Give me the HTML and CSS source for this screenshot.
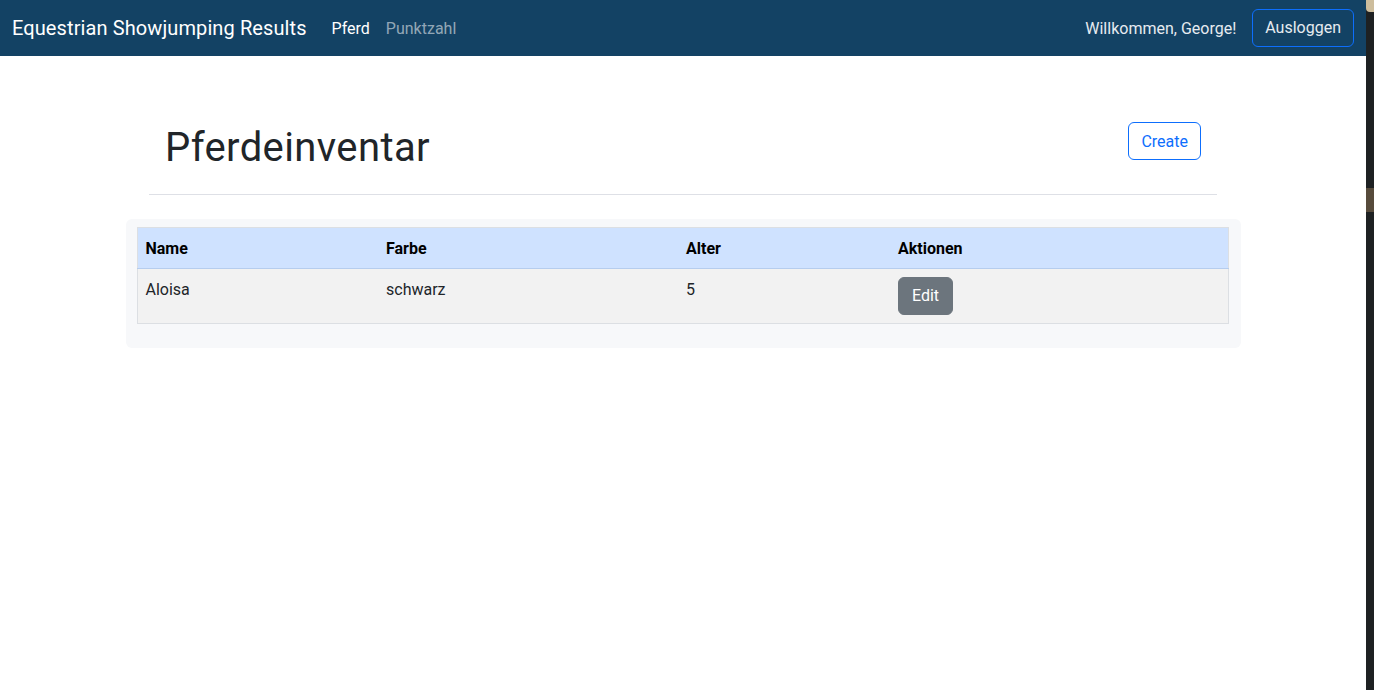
FILE: index.html
```html
<!DOCTYPE html>
<html lang="de">
<head>
<meta charset="utf-8">
<title>Equestrian Showjumping Results</title>
<link rel="stylesheet" href="styles.css">
</head>
<body>
<div class="page">
  <nav class="navbar">
    <div class="nav-left">
      <a class="brand" href="#">Equestrian Showjumping Results</a>
      <a class="nav-link active" href="#">Pferd</a>
      <a class="nav-link" href="#">Punktzahl</a>
    </div>
    <div class="nav-right">
      <span class="welcome">Willkommen, George!</span>
      <button class="btn btn-logout">Ausloggen</button>
    </div>
  </nav>
  <main class="main">
    <div class="head-row">
      <h1 class="title">Pferdeinventar</h1>
      <button class="btn btn-create">Create</button>
    </div>
    <hr class="divider">
    <div class="card">
      <table class="table">
        <thead>
          <tr>
            <th class="c1">Name</th>
            <th class="c2">Farbe</th>
            <th class="c3">Alter</th>
            <th class="c4">Aktionen</th>
          </tr>
        </thead>
        <tbody>
          <tr>
            <td>Aloisa</td>
            <td>schwarz</td>
            <td>5</td>
            <td class="actions"><button class="btn btn-edit">Edit</button></td>
          </tr>
        </tbody>
      </table>
    </div>
  </main>
</div>
<div class="strip">
  <div class="strip-top"></div>
  <div class="strip-patch"></div>
</div>
</body>
</html>
```
FILE: styles.css
```css
* { box-sizing: border-box; }
html, body { margin: 0; padding: 0; height: 100%; }
body {
  display: flex;
  font-family: Roboto, "Liberation Sans", sans-serif;
  color: #212529;
  background: #fff;
  overflow: hidden;
}
.page { width: 1366px; flex: none; min-height: 690px; background: #fff; }
.strip { width: 8px; flex: none; background: #1e2122; display: flex; flex-direction: column; }
.strip-top { height: 12px; background: #cdbd9c; border-bottom-left-radius: 4px; }
.strip-patch { margin-top: 176px; height: 24px; background: #574b3b; }

.navbar {
  height: 56px;
  background: #134264;
  display: flex;
  align-items: center;
  justify-content: space-between;
  padding: 0 12px;
}
.nav-left { display: flex; align-items: center; }
.brand {
  color: #fff;
  font-size: 20px;
  letter-spacing: 0.1px;
  text-decoration: none;
  margin-right: 17px;
}
.nav-link {
  color: rgba(255,255,255,0.55);
  font-size: 16px;
  text-decoration: none;
  padding: 8px 8px;
}
.nav-link.active { color: #fff; }
.nav-right { display: flex; align-items: center; }
.welcome { color: #e6ebf0; font-size: 16px; margin-right: 16px; }

.btn {
  font-family: inherit;
  font-size: 16px;
  line-height: 24px;
  height: 38px;
  padding: 6px 12px;
  border-radius: 6px;
  cursor: pointer;
}
.btn-logout { background: transparent; border: 1px solid #0d6efd; color: #e6ebf0; }
.btn-create { background: #fff; border: 1px solid #0d6efd; color: #0d6efd; padding-top: 7px; padding-bottom: 5px; }
.btn-edit { background: #6c757d; border: 1px solid #6c757d; color: #fff; padding: 6px 13px; }

.main { padding-top: 66px; }
.head-row {
  width: 1068px;
  margin: 0 auto;
  padding: 0 16px 0 16px;
  display: flex;
  justify-content: space-between;
  align-items: flex-start;
}
.title {
  margin: 0;
  padding-top: 2px;
  font-size: 40px;
  line-height: 48px;
  letter-spacing: 0.4px;
  font-weight: 400;
}
.divider {
  width: 1068px;
  margin: 22px auto 24px;
  border: 0;
  border-top: 1px solid #dee0e6;
}
.card {
  width: 1115px;
  margin: 0 auto;
  background: #f7f8fa;
  border-radius: 6px;
  padding: 8px 12px 24px 11px;
}
.table {
  width: 100%;
  border-collapse: collapse;
  border: 1px solid #dcdfe3;
  font-size: 16px;
}
.table th, .table td {
  text-align: left;
  vertical-align: top;
  padding: 9px 8px 7px;
  line-height: 24px;
}
.table td.actions { padding-top: 8px; padding-bottom: 8px; }
.table thead th {
  background: #cfe2ff;
  font-weight: 700;
  color: #000;
  border-bottom: 1px solid #b6cdee;
}
.table tbody td { background: #f2f2f2; color: #212529; }
.c1 { width: 241px; }
.c2 { width: 300px; }
.c3 { width: 212px; }
```
